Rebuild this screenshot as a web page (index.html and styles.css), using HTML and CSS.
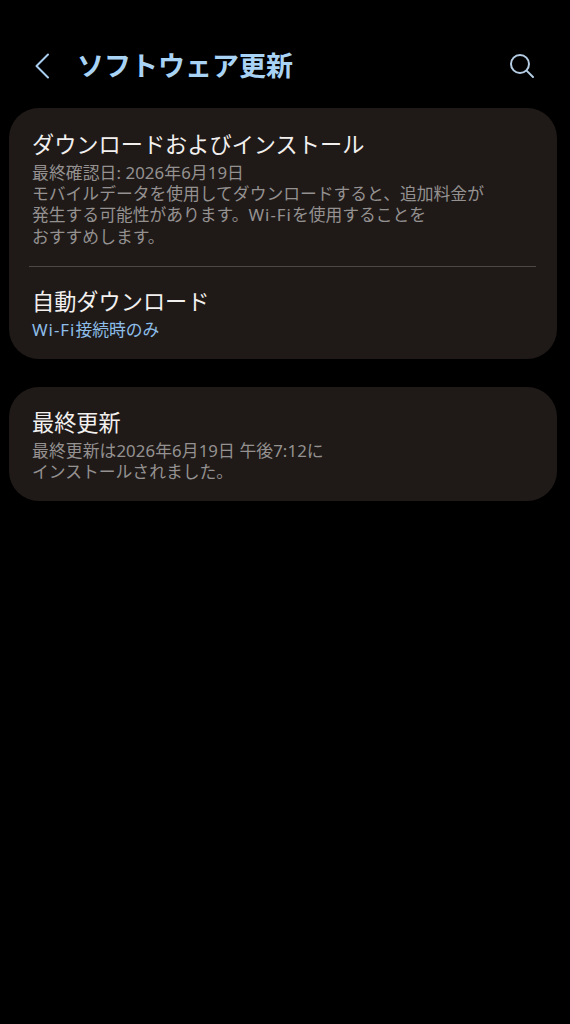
FILE: index.html
```html
<!DOCTYPE html>
<html lang="ja">
<head>
<meta charset="utf-8">
<title>ソフトウェア更新</title>
<link rel="stylesheet" href="styles.css">
</head>
<body>
<header class="appbar">
  <svg class="back" width="20" height="30" viewBox="0 0 20 30"><path d="M16 3.5 L4.5 15 L16 26.5" fill="none" stroke="#a9cdee" stroke-width="2" stroke-linecap="round" stroke-linejoin="round"/></svg>
  <h1 class="title">ソフトウェア更新</h1>
  <svg class="search" width="26" height="26" viewBox="0 0 26 26"><circle cx="11" cy="11" r="9" fill="none" stroke="#b4cde4" stroke-width="2"/><path d="M17.6 17.6 L24 24" fill="none" stroke="#b4cde4" stroke-width="2" stroke-linecap="round"/></svg>
</header>
<main class="content">
  <section class="card">
    <div class="item first">
      <h2 class="item-title">ダウンロードおよびインストール</h2>
      <p class="item-sub"><span class="date">最終確認日: 2026年6月19日</span><br>モバイルデータを使用してダウンロードすると、追加料金が<br>発生する可能性があります。<span class="latin">Wi-Fi</span>を使用することを<br>おすすめします。</p>
    </div>
    <hr class="divider">
    <div class="item second">
      <h2 class="item-title">自動ダウンロード</h2>
      <p class="item-sub accent"><span class="latin">Wi-Fi</span>接続時のみ</p>
    </div>
  </section>
  <section class="card">
    <div class="item third">
      <h2 class="item-title">最終更新</h2>
      <p class="item-sub"><span class="date">最終更新は2026年6月19日 午後7:12に</span><br>インストールされました。</p>
    </div>
  </section>
</main>
</body>
</html>
```
FILE: styles.css
```css
* { box-sizing: border-box; }
html, body { margin: 0; padding: 0; }
body {
  width: 570px;
  height: 1024px;
  overflow: hidden;
  background: #000;
  font-family: "Noto Sans", "Noto Sans CJK JP", sans-serif;
}
.appbar {
  display: flex;
  align-items: center;
  height: 108px;
  padding: 24px 35px 0 32px;
}
.back { flex: none; margin-right: 25px; }
.title {
  flex: 1;
  margin: 0;
  font-size: 27px;
  line-height: 36px;
  font-weight: 700;
  color: #a9d3f5;
}
.search { flex: none; }
.content {
  display: flex;
  flex-direction: column;
  gap: 28px;
  padding: 0 13px 0 9px;
}
.card {
  background: #1f1a18;
  border-radius: 30px;
}
.item { padding: 0 23px; }
.first { padding-top: 20px; height: 158px; }
.second { padding-top: 18px; height: 92px; }
.third { padding-top: 19px; height: 114px; }
.item-title {
  margin: 0;
  font-size: 22.2px;
  line-height: 34px;
  font-weight: 400;
  color: #f2f0ef;
}
.item-sub {
  margin: 0;
  font-size: 16.8px;
  line-height: 21.2px;
  color: #949190;
}
.latin { letter-spacing: 1px; }
.date { letter-spacing: 0.1px; }
.accent { color: #8dbde8; }
.divider {
  height: 1px;
  margin: 0 21px 0 20px;
  border: 0;
  background: #4b4846;
}
```
